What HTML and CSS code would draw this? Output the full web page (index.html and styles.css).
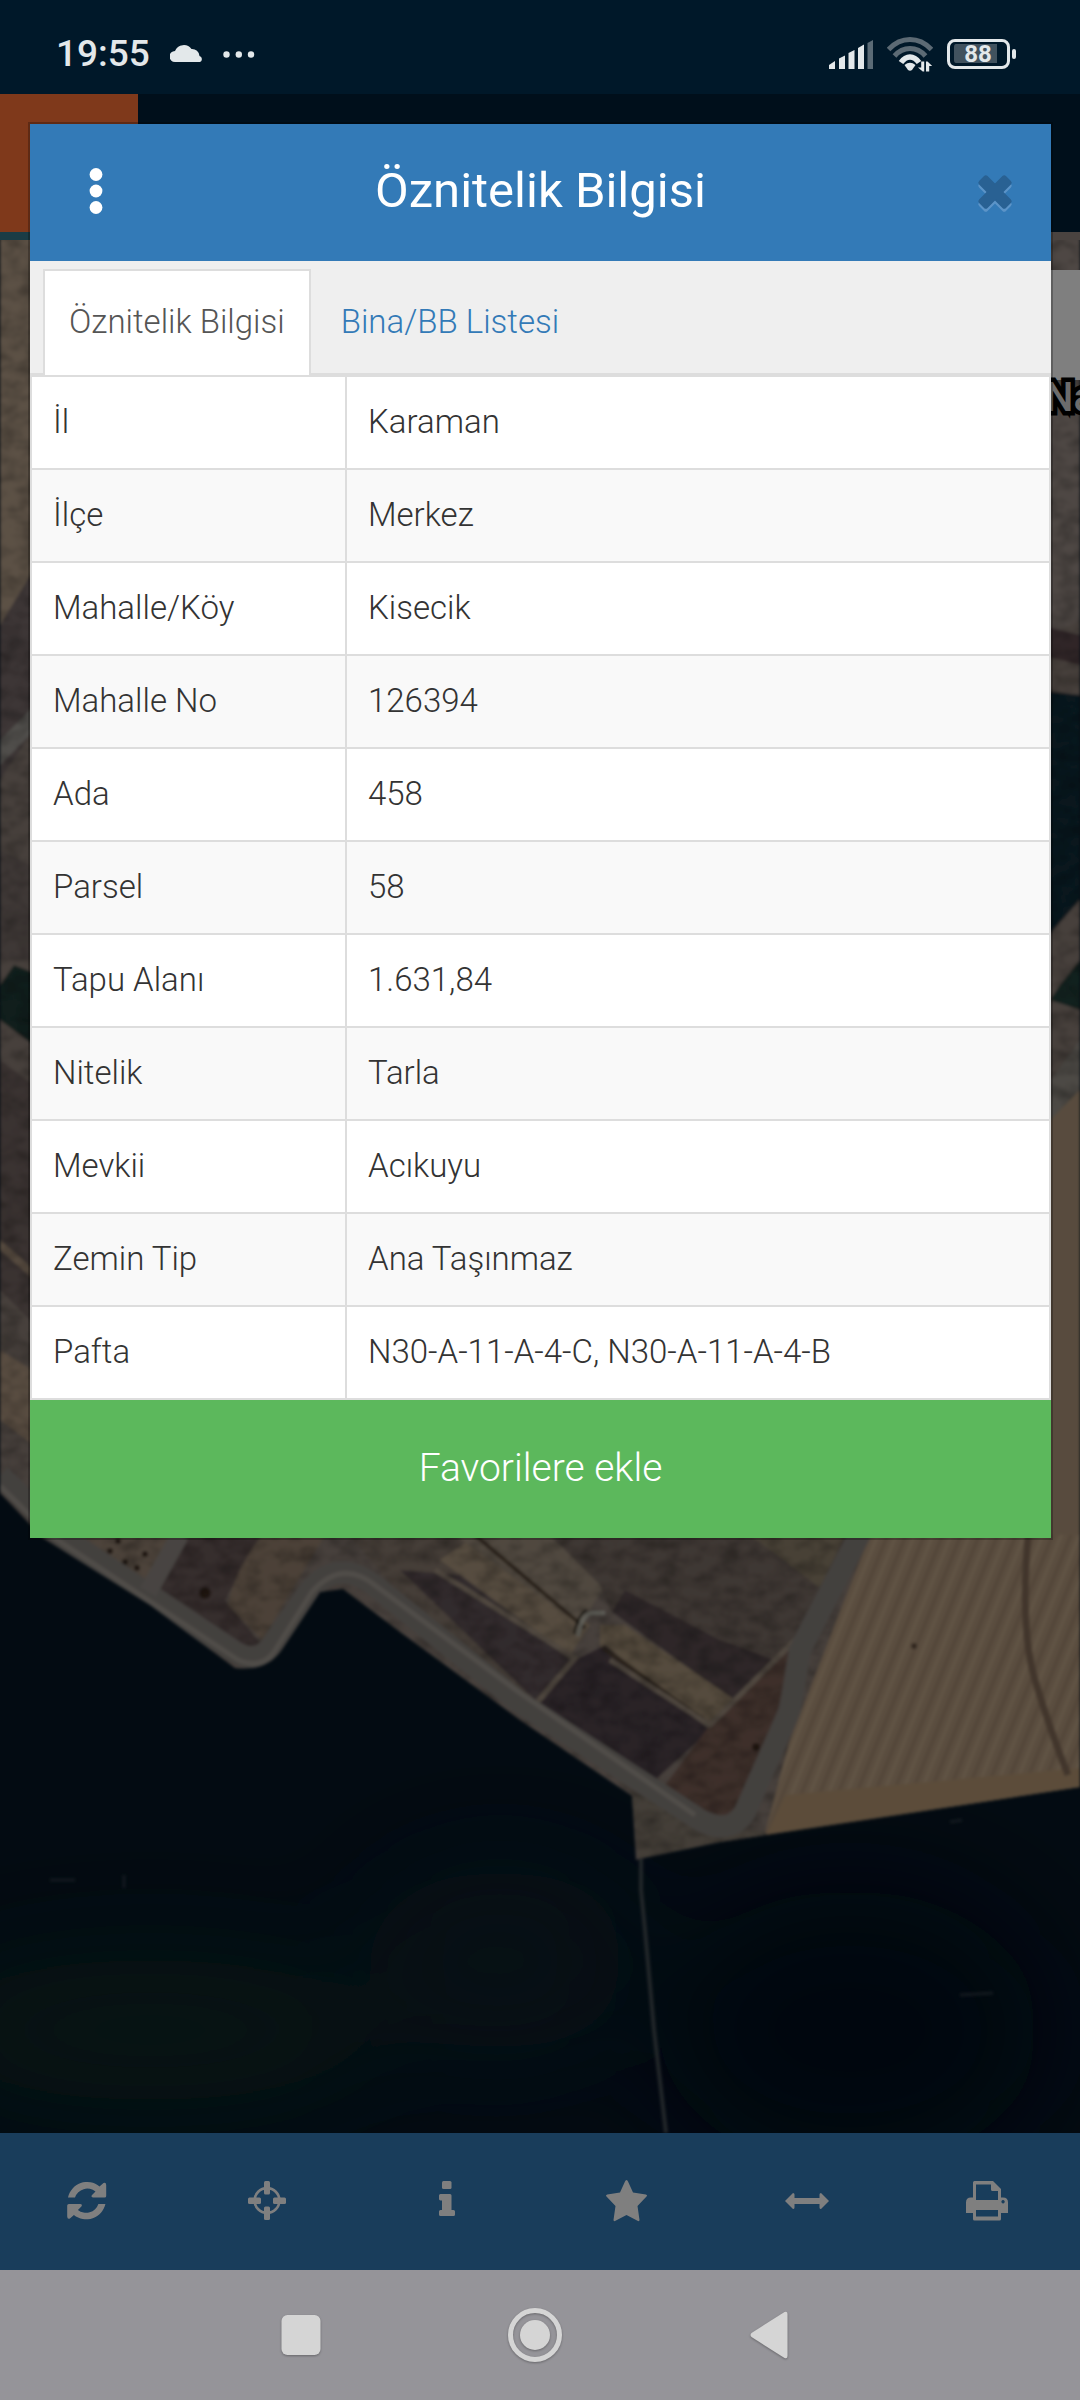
FILE: index.html
```html
<!DOCTYPE html>
<html lang="tr">
<head>
<meta charset="utf-8">
<meta name="viewport" content="width=device-width, initial-scale=1">
<title>Öznitelik Bilgisi</title>
<link rel="stylesheet" href="styles.css">
</head>
<body>
<div class="status-bar">
  <div class="status-left">
    <time class="clock">19:55</time>
    <svg class="cloud" width="33" height="19" viewBox="0 0 33 19" aria-hidden="true"><path d="M5 19a5.500 5.500 0 0 1 0-11A9.500 9.500 0 0 1 21.500 6a7.500 7.500 0 0 1 8 7A3.200 3.200 0 0 1 30 19z" fill="#e3e8ea"/></svg>
    <svg width="32" height="7" viewBox="0 0 32 7" aria-hidden="true"><g fill="#e3e8ea"><circle cx="3.500" cy="3.500" r="3.200"/><circle cx="15.800" cy="3.500" r="3.200"/><circle cx="28" cy="3.500" r="3.200"/></g></svg>
  </div>
  <div class="status-right">
    <svg width="44" height="29" viewBox="0 0 44 29" aria-hidden="true"><g fill="#e3e8ea"><path d="M0 29v-4l6-4v8z"/><path d="M10 29V18.500l6-3V29z"/><path d="M19.500 29V13l6-3V29z"/><path d="M29 29V8l6-3.500V29z"/><path opacity=".4" d="M38.500 29V3l5.500-3V29z"/></g></svg>
    <svg width="46" height="35" viewBox="0 0 46 35" aria-hidden="true"><g fill="none" stroke="#e3e8ea"><g stroke="#5c6a74"><path stroke-width="5" d="M1.500 12.500Q11 2.500 23 2.500t21.500 10"/><path stroke-width="5" d="M7.500 19Q14 11.500 23 11.500T38.500 19"/></g><path stroke-width="5.500" d="M14 25.500q4-5.500 9-5.500t9 5.500"/></g><g fill="#e3e8ea"><path d="M17.500 28q5.500-4.500 11 0l-3.500 5q-2 1.600-4 0z"/><path d="M34.200 24.500h3v10h-1.500L31 30.500h3.200zM39 24.500h1.500l4.700 4.500h-3v5.500H39z"/></g></svg>
    <svg class="battery" width="69" height="30" viewBox="0 0 69 30" aria-hidden="true"><rect x="1.500" y="1.500" width="60" height="27" rx="6.500" fill="none" stroke="#e3e8ea" stroke-width="3"/><path d="M9 5h41v19H9q-2 0-2-3V8q0-3 2-3z" fill="#41525e"/><rect x="65" y="10" width="4" height="10" rx="2" fill="#e3e8ea"/><text x="31" y="23" text-anchor="middle" class="battery-text">88</text></svg>
  </div>
</div>

<div class="app">
  <header class="app-bar"><button class="app-menu" type="button" aria-label="Menü"></button></header>
  <main class="map">
    <svg class="map-image" viewBox="0 232 1080 1901" preserveAspectRatio="xMidYMax slice" role="img" aria-label="Uydu görüntüsü">
      <defs>
        <filter id="grain" x="0" y="0" width="100%" height="100%"><feTurbulence type="fractalNoise" baseFrequency=".05 .08" numOctaves="4" seed="4"/><feColorMatrix values="0 0 0 0 0  0 0 0 0 0  0 0 0 0 0  1.600 0 0 0 -.6"/></filter>
        <filter id="soft"><feGaussianBlur stdDeviation="1.500"/></filter>
        <filter id="haze" x="-50%" y="-50%" width="200%" height="200%"><feGaussianBlur stdDeviation="55"/></filter>
        <pattern id="furrows" width="17" height="40" patternUnits="userSpaceOnUse" patternTransform="rotate(22)"><path d="M4 0v40" stroke="#a0866c" stroke-width="4"/><path d="M12 0v40" stroke="#ceb594" stroke-width="3"/></pattern>
        <clipPath id="land"><path id="landshape" d="M0 232H1080V1787L950 1807L785 1832L720 1842L643 1858L636 1860L632 1796L520 1720L400 1632L343 1589L320 1592L283 1648Q268 1672 235 1668L150 1605L43 1538L0 1493Z"/></clipPath>
      </defs>
      <rect y="232" width="1080" height="1901" fill="#061624"/>
      <g filter="url(#haze)">
        <ellipse cx="150" cy="2030" rx="230" ry="70" fill="#0c2b28"/>
        <ellipse cx="500" cy="1960" rx="130" ry="90" fill="#08202a"/>
        <ellipse cx="850" cy="2030" rx="190" ry="140" fill="#04101e"/>
      </g>
      <g filter="url(#soft)">
        <use href="#landshape" fill="#8e8078"/>
        <g clip-path="url(#land)">
          <path d="M0 232H40V560L0 625Z" fill="#b8a28b"/>
          <path d="M0 625L40 560V720L0 780Z" fill="#7a6c6c"/>
          <path d="M0 740L40 700V725L0 765Z" fill="#a09c96"/>
          <path d="M0 850L40 870V960H0Z" fill="#7d706c"/>
          <path d="M0 985L14 965L40 975V1050L0 1020Z" fill="#203c38"/>
          <path d="M0 1060L40 1090V1330L0 1290Z" fill="#756663"/>
          <path d="M0 1240L40 1275V1285L0 1250ZM0 1350L40 1375V1450L0 1420Z" fill="#b19982"/>
          <path d="M1040 232H1080V620L1040 640Z" fill="#9c8f88"/>
          <path d="M1040 625L1080 635V665L1040 655Z" fill="#604c50"/>
          <path d="M1040 690L1080 695V900L1040 945Z" fill="#122e3b"/>
          <path d="M1060 985L1080 960V1010L1050 1000Z" fill="#24433d"/>
          <path d="M1040 1095L1080 1040V1090L1040 1135Z" fill="#99938a"/>
          <path d="M60 1535H185L145 1590Z" fill="#9a8776"/>
          <path d="M185 1535H262L225 1600L262 1645L240 1650L160 1590Z" fill="#6c5b5a"/>
          <path d="M262 1535H325L262 1640L228 1605Q235 1570 262 1535Z" fill="#988370"/>
          <path d="M350 1535H470L575 1652L535 1702L395 1590Z" fill="#8b7c70"/>
          <path d="M400 1570L460 1575L570 1660L535 1700Z" fill="#64565a"/>
          <path d="M440 1560L470 1540L590 1625L570 1655Z" fill="#ad9980"/>
          <path d="M455 1535H548L605 1585L580 1625Z" fill="#a0917f"/>
          <path d="M550 1535H850L795 1640L735 1702L610 1610L600 1585Z" fill="#7d6f67"/>
          <path d="M625 1590L720 1640L775 1660L735 1702L612 1612Z" fill="#5c4e51"/>
          <path d="M750 1535H845L820 1588Z" fill="#91836d"/>
          <path d="M600 1625L625 1625L735 1700L715 1725L600 1650Z" fill="#aa967b"/>
          <path d="M575 1660L605 1645L710 1730L650 1785L535 1703Z" fill="#54464e"/>
          <path d="M710 1725L795 1645L770 1740L745 1815L695 1815L665 1785Z" fill="#7b5f55"/>
          <g fill="none">
            <path d="M475 1535L585 1628M603 1648L705 1721" stroke="#594839" stroke-width="4"/>
            <path d="M435 1570L575 1658L537 1703M610 1660L710 1725L800 1635" stroke="#a19180" stroke-width="5"/>
            <path d="M578 1636Q582 1614 592 1613H605" stroke="#c0bfb2" stroke-width="4"/>
            <path d="M574 1634Q578 1614 587 1610" stroke="#1b1d18" stroke-width="2"/>
          </g>
          <g fill="#3e2c20"><circle cx="110" cy="1551" r="3"/><circle cx="125" cy="1562" r="3"/><circle cx="137" cy="1568" r="3"/><circle cx="145" cy="1554" r="3"/><circle cx="118" cy="1541" r="3"/><circle cx="205" cy="1593" r="6"/><circle cx="756" cy="1747" r="4"/></g>
          <path d="M630 1790L720 1828L780 1832L640 1862Z" fill="#887d70"/>
          <rect y="232" width="1080" height="1640" filter="url(#grain)" opacity=".35"/>
          <path d="M1040 1130L1080 1090V1540H1040Z" fill="#b0977c"/>
          <path d="M870 1535H1080V1787L950 1807L765 1833L790 1740Z" fill="#b59b7f"/>
          <path d="M870 1535H1080V1787L950 1807L765 1833L790 1740Z" fill="url(#furrows)" opacity=".6"/>
          <path d="M765 1838L785 1795L1080 1768V1790L950 1807Z" fill="#b89975"/>
          <path d="M1028 1535Q1020 1630 1035 1680T1068 1775" fill="none" stroke="#846c58" stroke-width="7"/>
          <circle cx="914" cy="1646" r="3" fill="#5e4a3a"/>
          <g fill="none" stroke-linejoin="round">
            <path d="M0 1475L60 1535L148 1594L235 1652Q258 1665 272 1645L310 1590Q340 1555 380 1590L520 1703L700 1820Q730 1836 745 1812L790 1710L800 1650L862 1530" stroke="#87827d" stroke-width="22"/>
            <path d="M0 1486L50 1535L148 1600L238 1660Q262 1670 274 1652L312 1592Q342 1558 376 1586L516 1690L695 1815" stroke="#a09a92" stroke-width="5"/>
            <path d="M148 1592L180 1535" stroke="#908984" stroke-width="18"/>
          </g>
        </g>
        <path d="M641 1858V1890L645 1930L654 2030L666 2133" fill="none" stroke="#454d52" stroke-width="4"/>
        <path d="M960 1995L993 1993M950 1822L962 1820M50 1880H75M124 1875V1888" stroke="#26323c" stroke-width="3"/>
      </g>
      <path d="M1040 270H1080V380H1040Z" fill="#fff"/>
      <text x="1045" y="411" class="map-label">Na</text>
    </svg>
  </main>
  <nav class="toolbar" aria-label="Harita araçları">
    <button type="button" aria-label="Yenile"><svg width="40" height="40" viewBox="0 0 40 40"><path id="turn" d="M1 16.500A19.500 19.500 0 0 1 32.500 5.500L36.500 2Q39 .8 39.200 4V15Q39.200 16.500 37.500 16.500H26Q23.500 16 25 14L28.500 10.500A13 13 0 0 0 8 16.500Z"/><use href="#turn" transform="rotate(180 19.700 19.700)"/></svg></button>
    <button type="button" aria-label="Konum"><svg width="38" height="40" viewBox="0 0 38 40"><circle cx="19" cy="19.500" r="12.400" fill="none" stroke="#fff" stroke-width="2.600"/><rect x="16" width="6" height="13.500" rx="1.500"/><rect x="16" y="25.500" width="6" height="13.500" rx="1.500"/><rect y="16.500" width="13" height="6.500" rx="1.500"/><rect x="25" y="16.500" width="13" height="6.500" rx="1.500"/></svg></button>
    <button type="button" aria-label="Bilgi"><svg width="16" height="40" viewBox="0 0 16 40"><rect x="3" y="0" width="9.500" height="8" rx="1.500"/><path d="M1.500 13H11q1.500 0 1.500 1.500V29h2q1.500 0 1.500 1.500v3q0 1.500-1.500 1.500h-13Q0 35 0 33.500v-3Q0 29 1.500 29H3V19.500H1.500Q0 19 0 18V14.500Q0 13 1.500 13z"/></svg></button>
    <button type="button" aria-label="Favoriler"><svg width="42" height="42" viewBox="0 0 42 42"><path d="M20.500 0q1 0 1.500 1.500L27 12.500l12.800 2q2 .5.700 2L31.500 26l2 14q0 1.500-1.500 1L20.500 35 9 41q-1.500.5-1.500-1l2-14L.5 16.500q-1.200-1.500.8-2L14 12.500 19 1.500Q19.500 0 20.500 0z"/></svg></button>
    <button type="button" aria-label="Ölçüm"><svg width="44" height="16" viewBox="0 0 44 16"><path d="M0 8L8 0q1.500 0 1.500 1.500V5h25V1.500Q34.500 0 36 0l8 8-8 8q-1.500 0-1.500-1.500V11h-25v3.500Q9.500 16 8 16z"/></svg></button>
    <button type="button" aria-label="Yazdır"><svg width="42" height="40" viewBox="0 0 42 40"><path fill-rule="evenodd" d="M8.500 0H27L35 8v8.500h2q5 0 5 5V32h-7v6q0 1.500-1.500 1.500h-25Q7 39.500 7 38v-6H0V21.500q0-5 5-5h2v-15Q7 0 8.500 0zM10 3.500V19h22v-9h-5.500Q25 10 25 8.500v-5zM10 29v6.500h22V29zM37 19a1.700 1.700 0 1 0 .1 0z"/></svg></button>
  </nav>

  <div class="backdrop"></div>

  <section class="modal" role="dialog" aria-labelledby="modal-title">
    <div class="modal-header">
      <button class="icon-button" type="button" aria-label="Seçenekler"><svg width="14" height="46" viewBox="0 0 14 46" fill="#fff"><circle cx="7" cy="6.500" r="6.400"/><circle cx="7" cy="23" r="6.400"/><circle cx="7" cy="39.500" r="6.400"/></svg></button>
      <h1 id="modal-title">Öznitelik Bilgisi</h1>
      <button class="icon-button close" type="button" aria-label="Kapat"><svg width="34" height="36" viewBox="0 0 34 36" overflow="visible"><g fill="#5c94c8" transform="translate(0 3)"><rect x="-2" y="11" width="38" height="12" rx="2.500" transform="rotate(45 17 17)"/><rect x="-2" y="11" width="38" height="12" rx="2.500" transform="rotate(-45 17 17)"/></g><g fill="#296193"><rect x="-2" y="11" width="38" height="12" rx="2.500" transform="rotate(45 17 17)"/><rect x="-2" y="11" width="38" height="12" rx="2.500" transform="rotate(-45 17 17)"/></g></svg></button>
    </div>
    <nav class="tabs">
      <a class="tab active" href="#bilgi" aria-current="page">Öznitelik Bilgisi</a>
      <a class="tab" href="#bina">Bina/BB Listesi</a>
    </nav>
    <table class="attributes" id="bilgi">
      <tbody>
        <tr><th scope="row">İl</th><td>Karaman</td></tr>
        <tr><th scope="row">İlçe</th><td>Merkez</td></tr>
        <tr><th scope="row">Mahalle/Köy</th><td>Kisecik</td></tr>
        <tr><th scope="row">Mahalle No</th><td>126394</td></tr>
        <tr><th scope="row">Ada</th><td>458</td></tr>
        <tr><th scope="row">Parsel</th><td>58</td></tr>
        <tr><th scope="row">Tapu Alanı</th><td>1.631,84</td></tr>
        <tr><th scope="row">Nitelik</th><td>Tarla</td></tr>
        <tr><th scope="row">Mevkii</th><td>Acıkuyu</td></tr>
        <tr><th scope="row">Zemin Tip</th><td>Ana Taşınmaz</td></tr>
        <tr><th scope="row">Pafta</th><td>N30-A-11-A-4-C, N30-A-11-A-4-B</td></tr>
      </tbody>
    </table>
    <button class="favorite" type="button">Favorilere ekle</button>
  </section>
</div>

<nav class="system-nav" aria-label="Sistem">
  <button type="button" aria-label="Son uygulamalar"><svg width="40" height="42" viewBox="0 0 40 42"><rect x=".5" y="1" width="39" height="40" rx="6"/></svg></button>
  <button type="button" aria-label="Ana ekran"><svg width="56" height="56" viewBox="0 0 56 56"><circle cx="28" cy="28" r="24.500" fill="none" stroke="#d5d5d5" stroke-width="5"/><circle cx="28" cy="28" r="15"/></svg></button>
  <button type="button" aria-label="Geri"><svg width="38" height="48" viewBox="0 0 38 48"><path d="M1.500 22L34.500 1Q37.500 0 37.500 3V45Q37.500 48 34.500 47L1.500 26Q-.5 24 1.500 22Z"/></svg></button>
</nav>
</body>
</html>
```
FILE: styles.css
```css
* {
  box-sizing: border-box;
}

body {
  margin: 0;
  min-height: 100vh;
  display: flex;
  flex-direction: column;
  font-family: Roboto, "Noto Sans", sans-serif;
  font-size: 33px;
  font-weight: 300;
  color: #333;
  background: #001829;
}

button {
  margin: 0;
  padding: 0;
  border: 0;
  background: none;
  font: inherit;
  color: inherit;
}

svg {
  display: block;
}

/* Phone status bar */
.status-bar {
  display: flex;
  justify-content: space-between;
  align-items: center;
  height: 94px;
  padding: 14px 64px 0 56px;
  background: #001829;
}

.status-left,
.status-right {
  display: flex;
  align-items: center;
}

.status-left {
  gap: 20px;
}

.status-right {
  gap: 14px;
}

.clock {
  font-size: 37px;
  font-weight: 500;
  line-height: 40px;
  color: #e3e8ea;
}

.cloud {
  margin-bottom: 4px;
}

.battery-text {
  font-size: 24px;
  font-weight: 700;
  fill: #e3e8ea;
}

/* Application behind the dialog */
.app {
  position: relative;
  flex: 1;
  display: flex;
  flex-direction: column;
}

.app-bar {
  display: flex;
  height: 138px;
  background: #001e36;
}

.app-menu {
  width: 138px;
  background: #fe7236;
}

.map {
  position: relative;
  flex: 1;
  min-height: 1400px;
  border-top: 8px solid #948780;
  border-image: linear-gradient(90deg, #34798a 138px, #948780 138px) 8;
  background: #051522;
}

.map-image {
  position: absolute;
  inset: 0;
  width: 100%;
  height: 100%;
}

.map-label {
  font-size: 40px;
  font-weight: 500;
  fill: #d8d8d8;
  stroke: #000;
  stroke-width: 9px;
  paint-order: stroke;
}

.toolbar {
  display: grid;
  grid-template-columns: repeat(6, 1fr);
  height: 137px;
  background: #337ab7;
}

.toolbar button {
  display: flex;
  justify-content: center;
  align-items: center;
  padding: 0 6px 2px 0;
  fill: #fff;
}

.backdrop {
  position: absolute;
  inset: 0;
  background: rgba(0, 0, 0, .5);
}

/* Dialog */
.modal {
  position: absolute;
  top: 30px;
  left: 30px;
  right: 29px;
  background: #fff;
  box-shadow: 0 0 0 2px rgba(0, 0, 0, .25);
}

.modal-header {
  display: grid;
  grid-template-columns: 64px 1fr 64px;
  align-items: center;
  height: 137px;
  padding: 0 34px 4px;
  color: #fff;
  background: #337ab7;
}

.modal-header h1 {
  margin: 0;
  font-size: 49px;
  font-weight: 400;
  line-height: 60px;
  text-align: center;
}

.icon-button {
  display: flex;
  justify-content: center;
}

.icon-button.close {
  justify-content: flex-end;
  padding: 4px 5px 0 0;
}

.tabs {
  display: flex;
  gap: 4px;
  padding: 8px 13px 0;
  border-bottom: 2px solid #ddd;
  background: #efefef;
}

.tab {
  padding: 27px 24px;
  border: 2px solid transparent;
  border-bottom: 0;
  line-height: 48px;
  color: #337ab7;
  text-decoration: none;
}

.tab.active {
  margin-bottom: -2px;
  padding-bottom: 29px;
  border-color: #ddd;
  color: #555;
  background: #fff;
}

.attributes {
  width: 100%;
  border-collapse: collapse;
  table-layout: fixed;
}

.attributes th,
.attributes td {
  padding: 21px 21px 23px;
  border: 2px solid #ddd;
  font-weight: 300;
  line-height: 47px;
  text-align: left;
}

.attributes th {
  width: 315px;
}

.attributes tr:nth-child(even) {
  background: #f9f9f9;
}

.favorite {
  display: block;
  width: 100%;
  height: 138px;
  padding-bottom: 2px;
  font-size: 39px;
  color: #fff;
  background: #5cb85c;
}

/* Phone navigation */
.system-nav {
  display: flex;
  justify-content: center;
  height: 130px;
  padding-right: 10px;
  background: #959499;
}

.system-nav button {
  display: flex;
  justify-content: center;
  align-items: center;
  width: 234px;
  fill: #d5d5d5;
  filter: drop-shadow(0 1px 1px rgba(0, 0, 0, .3));
}
```
